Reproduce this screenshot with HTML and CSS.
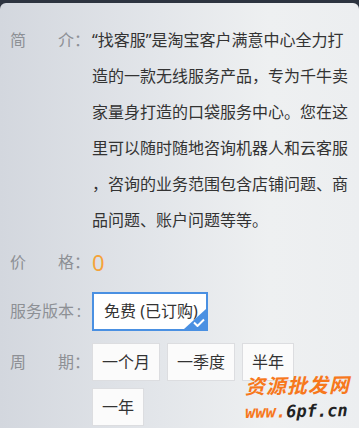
FILE: index.html
```html
<!DOCTYPE html>
<html>
<head>
<meta charset="utf-8">
<link rel="stylesheet" href="styles.css">
</head>
<body>
<div class="panel">
  <div class="row intro">
    <div class="label"><span class="lt">简介</span><span class="colon">：</span></div>
    <div class="content desc">“找客服”是淘宝客户满意中心全力打造的一款无线服务产品，专为千牛卖家量身打造的口袋服务中心。您在这里可以随时随地咨询机器人和云客服，咨询的业务范围包含店铺问题、商品问题、账户问题等等。</div>
  </div>
  <div class="row price">
    <div class="label"><span class="lt">价格</span><span class="colon">：</span></div>
    <div class="content"><span class="num">0</span></div>
  </div>
  <div class="row version">
    <div class="label"><span class="lt">服务版本</span><span class="colon">:</span></div>
    <div class="content">
      <div class="opt selected">免费 (已订购)
        <span class="corner"><svg width="12" height="9" viewBox="0 0 12 9"><path d="M1 4.5 L4.5 8 L11 1.5" fill="none" stroke="#fff" stroke-width="2"/></svg></span>
      </div>
    </div>
  </div>
  <div class="row period">
    <div class="label"><span class="lt">周期</span><span class="colon">：</span></div>
    <div class="content btns">
      <div class="btn">一个月</div>
      <div class="btn">一季度</div>
      <div class="btn">半年</div>
      <div class="btn">一年</div>
    </div>
  </div>
  <div class="mark">
    <div class="mark1">资源批发网</div>
    <div class="mark2"><span class="o">www.</span><span class="d">6pf.cn</span></div>
  </div>
</div>
</body>
</html>
```

FILE: styles.css
```css
html, body {
  margin: 0;
  padding: 0;
  background: #2d3440;
  width: 359px;
  height: 428px;
  overflow: hidden;
}
body {
  padding-top: 3px;
  box-sizing: border-box;
  font-family: "Noto Sans", "Noto Sans CJK SC", sans-serif;
}
.panel {
  position: relative;
  height: 425px;
  border-radius: 6px 6px 0 0;
  background: linear-gradient(90deg, #d3d7de 0%, #e3e6ea 45%, #eef0f1 75%, #eceef0 100%);
  padding: 19px 10px 0 10px;
  box-sizing: border-box;
}
.row {
  display: flex;
  align-items: flex-start;
}
.label {
  width: 82px;
  flex: none;
  display: flex;
  color: #8d9095;
  font-size: 16px;
  line-height: 36px;
}
.lt {
  display: inline-block;
  width: 64px;
  text-align: justify;
  text-align-last: justify;
}
.colon {
  display: inline-block;
  width: 10px;
  text-align: center;
}
.content {
  flex: 1;
  color: #333;
  font-size: 16px;
  line-height: 36px;
}
.desc {
  width: 257px;
  flex: none;
  line-break: anywhere;
}
.price {
  margin-top: 6px;
}
.num {
  color: #f5a33a;
  font-size: 22px;
  line-height: 36px;
}
.version {
  margin-top: 9px;
}
.version .label {
  line-height: 39px;
}
.version .content {
  line-height: normal;
}
.opt {
  position: relative;
  display: block;
  box-sizing: border-box;
  height: 39px;
  width: 116px;
  line-height: 35px;
  padding-left: 10px;
  background: #fff;
  border: 2px solid #4a90e2;
  color: #333;
  font-size: 16px;
  overflow: hidden;
}
.corner {
  position: absolute;
  right: 0;
  bottom: 0;
  width: 0;
  height: 0;
  border-style: solid;
  border-width: 0 0 20px 22px;
  border-color: transparent transparent #4a90e2 transparent;
}
.corner svg {
  position: absolute;
  right: 1px;
  bottom: -18px;
}
.period {
  margin-top: 12px;
}
.period .label {
  line-height: 38px;
}
.btns {
  display: flex;
  flex-wrap: wrap;
  gap: 7px;
  width: 215px;
  flex: none;
  line-height: normal;
}
.btn {
  box-sizing: border-box;
  height: 38px;
  line-height: 22px;
  padding: 7px 9px;
  background: #fbfbfb;
  border: 1px solid #dcdde0;
  color: #333;
  font-size: 16px;
}
.mark {
  position: absolute;
  left: 245px;
  top: 371px;
  transform: rotate(-1deg);
}
.mark1 {
  font-family: "Noto Sans CJK SC", sans-serif;
  color: #f7781c;
  font-size: 20px;
  line-height: 22px;
  letter-spacing: 1px;
  font-style: italic;
  font-weight: bold;
}
.mark2 {
  font-family: "DejaVu Sans Mono", monospace;
  font-size: 17px;
  line-height: 24px;
  margin-top: 3px;
  font-weight: bold;
  font-style: italic;
}
.mark2 .o { color: #f7781c; }
.mark2 .d { color: #222; }
```
